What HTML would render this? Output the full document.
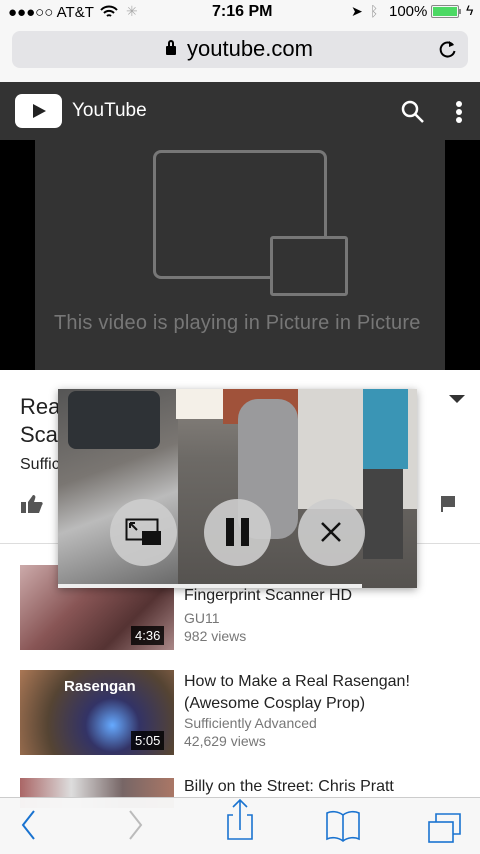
<!DOCTYPE html>
<html><head><meta charset="utf-8"><style>
*{margin:0;padding:0;box-sizing:border-box}
body{width:480px;height:854px;overflow:hidden;position:relative;background:#fff;font-family:"Liberation Sans",sans-serif}
.a{position:absolute}
.t{position:absolute;white-space:nowrap}
</style></head><body>
<div class="a" style="left:0;top:0;width:480px;height:82px;background:#f7f7f7"></div>
<div class="t" style="left:8px;top:4px;font-size:15px;color:#000">●●●○○ AT&amp;T</div>
<svg class="a" style="left:100px;top:5px" width="18" height="14" viewBox="0 0 18 14"><path d="M1 5a11 11 0 0 1 16 0M4 8a7 7 0 0 1 10 0M7 11a3 3 0 0 1 4 0" stroke="#000" stroke-width="2" fill="none"/></svg>
<div class="t" style="left:126px;top:3px;font-size:14px;color:#aaa">✳</div>
<div class="t" style="left:212px;top:3px;font-size:16px;font-weight:bold;color:#000">7:16 PM</div>
<div class="t" style="left:351px;top:3px;font-size:14px;color:#000">➤</div>
<div class="t" style="left:370px;top:3px;font-size:14px;color:#999">ᛒ</div>
<div class="t" style="left:389px;top:3px;font-size:15px;color:#000">100%</div>
<div class="a" style="left:431px;top:5px;width:28px;height:13px;border:1px solid #888;border-radius:2px;padding:1px"><div style="width:100%;height:100%;background:#4cd964"></div></div>
<div class="a" style="left:459px;top:9px;width:2px;height:5px;background:#888"></div>
<div class="t" style="left:466px;top:2px;font-size:14px">ϟ</div>
<div class="a" style="left:12px;top:31px;width:456px;height:37px;background:#e4e4e7;border-radius:8px"></div>
<div class="a" style="left:166px;top:46px;width:10px;height:9px;background:#000;border-radius:1px"></div>
<div class="a" style="left:168px;top:40px;width:6px;height:8px;border:2px solid #000;border-bottom:none;border-radius:3px 3px 0 0"></div>
<div class="t" style="left:187px;top:36px;font-size:22px;color:#000">youtube.com</div>
<svg class="a" style="left:438px;top:39px" width="20" height="20" viewBox="0 0 20 20"><path d="M15 6a7 7 0 1 0 1.5 6" stroke="#000" stroke-width="2" fill="none"/><path d="M11 2l5 4-5 2z" fill="#000"/></svg>
<div class="a" style="left:0;top:82px;width:480px;height:58px;background:#333"></div>
<div class="a" style="left:15px;top:94px;width:47px;height:34px;background:#fff;border-radius:7px"></div>
<svg class="a" style="left:30px;top:102px" width="18" height="18"><path d="M3 2l13 7-13 7z" fill="#222"/></svg>
<div class="t" style="left:72px;top:100px;font-size:19px;color:#fff">YouTube</div>
<svg class="a" style="left:400px;top:99px" width="26" height="26"><circle cx="10" cy="10" r="7" stroke="#fff" stroke-width="2.5" fill="none"/><path d="M15 15l8 8" stroke="#fff" stroke-width="2.5"/></svg>
<div class="a" style="left:456px;top:101px;width:6px;height:6px;border-radius:3px;background:#fff;box-shadow:0 8px 0 #fff,0 16px 0 #fff"></div>
<div class="a" style="left:0;top:140px;width:480px;height:230px;background:#000"></div>
<div class="a" style="left:35px;top:140px;width:410px;height:230px;background:#333"></div>
<div class="a" style="left:153px;top:150px;width:174px;height:129px;border:3px solid #777;border-radius:8px"></div>
<div class="a" style="left:270px;top:236px;width:78px;height:60px;border:3px solid #777;border-radius:3px;background:#333"></div>
<div class="t" style="left:54px;top:312px;font-size:20px;letter-spacing:0.2px;color:#777">This video is playing in Picture in Picture</div>
<div class="t" style="left:20px;top:393px;font-size:22px;color:#222;line-height:28px">Real Fingerprint<br>Scanner HD</div>
<div class="t" style="left:20px;top:456px;font-size:16px;color:#222">Sufficiently</div>
<div class="t" style="left:388px;top:393px;font-size:22px;color:#222">t</div>
<div class="a" style="left:449px;top:395px;border:8px solid transparent;border-top:8px solid #333;border-bottom:0"></div>
<svg class="a" style="left:20px;top:494px" width="24" height="20"><rect x="1" y="8" width="5" height="11" fill="#555"/><path d="M8 8l5-7c2 0 3 1 2 4l-1 3h7c2 0 2 2 1 3l-3 8H8z" fill="#555"/></svg>
<svg class="a" style="left:440px;top:495px" width="16" height="18"><path d="M2 1v16M2 2h12v9H2" stroke="#555" stroke-width="2" fill="#555"/></svg>
<div class="a" style="left:0;top:543px;width:480px;height:1px;background:#ddd"></div>
<div class="a" style="left:20px;top:565px;width:154px;height:85px;background:linear-gradient(135deg,#caa 0%,#855 40%,#533 70%,#a88 100%)"></div>
<div class="t" style="left:131px;top:626px;background:rgba(0,0,0,.8);color:#fff;font-size:13px;padding:2px 4px">4:36</div>
<div class="t" style="left:184px;top:587px;font-size:16px;color:#222">Fingerprint Scanner HD</div>
<div class="t" style="left:184px;top:610px;font-size:14px;color:#777">GU11</div>
<div class="t" style="left:184px;top:628px;font-size:14px;color:#777">982 views</div>
<div class="a" style="left:20px;top:670px;width:154px;height:85px;background:radial-gradient(circle at 60% 65%,#6af 0%,#336 25%,#543 60%,#a75 100%)"></div>
<div class="t" style="left:64px;top:678px;font-size:15px;font-weight:bold;color:#fff">Rasengan</div>
<div class="t" style="left:131px;top:731px;background:rgba(0,0,0,.8);color:#fff;font-size:13px;padding:2px 4px">5:05</div>
<div class="t" style="left:184px;top:671px;font-size:16px;color:#222;line-height:22px">How to Make a Real Rasengan!<br>(Awesome Cosplay Prop)</div>
<div class="t" style="left:184px;top:715px;font-size:14px;color:#777">Sufficiently Advanced</div>
<div class="t" style="left:184px;top:733px;font-size:14px;color:#777">42,629 views</div>
<div class="a" style="left:20px;top:778px;width:154px;height:30px;background:linear-gradient(90deg,#a66,#ddd,#766,#a76)"></div>
<div class="t" style="left:184px;top:778px;font-size:16px;color:#222">Billy on the Street: Chris Pratt</div>
<div class="a" style="left:58px;top:389px;width:359px;height:199px;background:linear-gradient(180deg,#8a8580 0%,#6d6a66 35%,#55524f 100%);box-shadow:0 2px 8px rgba(0,0,0,.35);overflow:hidden">
<div class="a" style="left:0;top:0;width:120px;height:199px;background:linear-gradient(160deg,#555 0%,#7a7672 40%,#bbb 60%,#666 100%)"></div>
<div class="a" style="left:10px;top:2px;width:92px;height:58px;background:#2e3236;border-radius:8px"></div>
<div class="a" style="left:118px;top:0;width:50px;height:30px;background:#f4f0e8"></div>
<div class="a" style="left:165px;top:0;width:80px;height:35px;background:#a0523a"></div>
<div class="a" style="left:240px;top:0;width:119px;height:120px;background:#d8d6d2"></div>
<div class="a" style="left:180px;top:10px;width:60px;height:140px;background:#9a9a9c;border-radius:20px"></div>
<div class="a" style="left:305px;top:0;width:45px;height:80px;background:#3a95b5"></div>
<div class="a" style="left:305px;top:80px;width:40px;height:90px;background:#444"></div>
<div class="a" style="left:0;top:195px;width:304px;height:4px;background:#eee"></div>
</div>
<div class="a" style="left:110px;top:499px;width:67px;height:67px;border-radius:50%;background:rgba(205,205,205,.9)"></div>
<div class="a" style="left:204px;top:499px;width:67px;height:67px;border-radius:50%;background:rgba(205,205,205,.9)"></div>
<div class="a" style="left:298px;top:499px;width:67px;height:67px;border-radius:50%;background:rgba(205,205,205,.9)"></div>
<svg class="a" style="left:125px;top:518px" width="38" height="30"><rect x="1.5" y="1.5" width="31" height="20" stroke="#111" stroke-width="2" fill="none"/><rect x="17" y="13" width="19" height="14" fill="#111"/><path d="M5 5l7 7M5 5h5M5 5v5" stroke="#111" stroke-width="2" fill="none"/></svg>
<div class="a" style="left:226px;top:518px;width:8px;height:28px;background:#111"></div>
<div class="a" style="left:241px;top:518px;width:8px;height:28px;background:#111"></div>
<svg class="a" style="left:320px;top:521px" width="22" height="22"><path d="M2 2l18 18M20 2L2 20" stroke="#111" stroke-width="2.5"/></svg>
<div class="a" style="left:0;top:797px;width:480px;height:57px;background:rgba(247,247,247,.97);border-top:1px solid #ccc"></div>
<svg class="a" style="left:0;top:797px" width="480" height="57"><path d="M34 14l-11 14 11 14" stroke="#1a73d0" stroke-width="2" fill="none"/><path d="M130 14l11 14-11 14" stroke="#bbb" stroke-width="2" fill="none"/><path d="M233 18h-5v24h24v-24h-5M240 33V3M233 10l7-7 7 7" stroke="#1a73d0" stroke-width="1.6" fill="none"/><path d="M343 18c-5-4-12-4-16-2v26c4-2 11-2 16 2c5-4 12-4 16-2V16c-4-2-11-2-16 2zV44" stroke="#1a73d0" stroke-width="1.6" fill="none"/><rect x="429" y="25" width="24" height="20" stroke="#1a73d0" stroke-width="1.6" fill="none"/><path d="M436 25v-8h24v20h-7" stroke="#1a73d0" stroke-width="1.6" fill="none"/></svg>
</body></html>
